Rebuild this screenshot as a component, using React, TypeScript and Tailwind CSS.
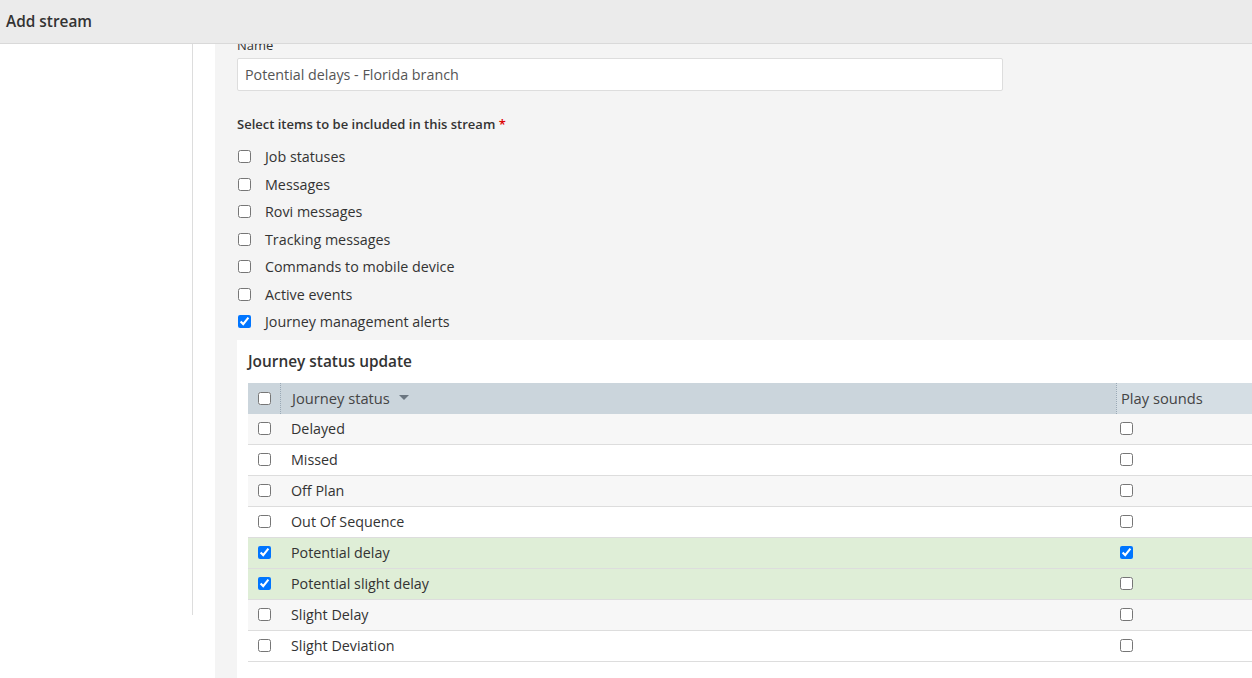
import React from "react";

const streamItems = [
  { label: "Job statuses", checked: false },
  { label: "Messages", checked: false },
  { label: "Rovi messages", checked: false },
  { label: "Tracking messages", checked: false },
  { label: "Commands to mobile device", checked: false },
  { label: "Active events", checked: false },
  { label: "Journey management alerts", checked: true },
];

const statuses = [
  { name: "Delayed", selected: false, sound: false },
  { name: "Missed", selected: false, sound: false },
  { name: "Off Plan", selected: false, sound: false },
  { name: "Out Of Sequence", selected: false, sound: false },
  { name: "Potential delay", selected: true, sound: true },
  { name: "Potential slight delay", selected: true, sound: false },
  { name: "Slight Delay", selected: false, sound: false },
  { name: "Slight Deviation", selected: false, sound: false },
];

function Check({ checked }: { checked: boolean }) {
  return (
    <input
      type="checkbox"
      defaultChecked={checked}
      className="m-0 h-[13px] w-[13px] shrink-0"
    />
  );
}

export default function App() {
  return (
    <div
      className="flex h-[678px] w-[1252px] flex-col overflow-hidden bg-white text-[#333]"
      style={{ fontFamily: '"Open Sans", "Noto Sans", sans-serif' }}
    >
      <div className="flex h-[44px] shrink-0 items-center border-b border-[#d9d9d9] bg-[#ebebeb] px-[6px]">
        <h1 className="text-[15.4px] font-semibold text-[#333]">Add stream</h1>
      </div>

      <div className="flex min-h-0 flex-1">
        <div className="h-[571px] w-[193px] shrink-0 self-start border-r border-[#ddd]" />
        <div className="w-[22px] shrink-0" />
        <div className="min-w-0 flex-1 overflow-hidden bg-[#f4f4f4] pl-[22px]">
          <div className="-mt-[8px] w-[1100px]">
            <label className="mb-[4px] block h-[18px] text-[13px] leading-[18px] text-[#333]">
              Name
            </label>
            <input
              type="text"
              defaultValue="Potential delays - Florida branch"
              className="block h-[33px] w-[766px] rounded-[2px] border border-[#ddd] bg-white px-[7px] text-[14.3px] text-[#555] outline-none"
            />

            <div className="mt-[24px] h-[18px] text-[13px] font-semibold leading-[18px] text-[#333]">
              Select items to be included in this stream{" "}
              <span className="text-[#d00]">*</span>
            </div>

            <div className="mt-[10px] flex flex-col">
              {streamItems.map((item) => (
                <label
                  key={item.label}
                  className="flex h-[27.5px] items-center gap-[14px] pl-[1px] text-[14.3px] text-[#333]"
                >
                  <Check checked={item.checked} />
                  <span>{item.label}</span>
                </label>
              ))}
            </div>

            <div className="mt-[4px] h-[400px] bg-white px-[11px] pt-[12px]">
              <h2 className="mb-[11px] h-[20px] text-[15.4px] font-semibold leading-[20px] text-[#333]">
                Journey status update
              </h2>

              <div className="text-[14.3px] text-[#333]">
                <div className="flex h-[31px] items-center bg-[#cbd5dc]">
                  <div className="flex h-full w-[32px] shrink-0 items-center pl-[10px]">
                    <Check checked={false} />
                  </div>
                  <div className="flex h-full flex-1 items-center border-l border-dotted border-[#9aa9b6] pl-[11px] text-[14.7px] text-[#444]">
                    Journey status
                    <svg width="10" height="6" viewBox="0 0 10 6" className="ml-[9px]">
                      <path d="M0 0 L10 0 L5 5 Z" fill="#6b7680" />
                    </svg>
                  </div>
                  <div className="flex h-full w-[210px] shrink-0 items-center border-l border-dotted border-[#9aa9b6] bg-[#d5dee4] pl-[4px] text-[14.7px] text-[#444]">
                    Play sounds
                  </div>
                </div>

                {statuses.map((s, i) => {
                  const bg = s.selected
                    ? "bg-[#dfeed7]"
                    : i % 2 === 0
                    ? "bg-[#f7f7f7]"
                    : "bg-white";
                  return (
                    <div
                      key={s.name}
                      className={`flex h-[31px] items-center border-b border-[#ddd] ${bg}`}
                    >
                      <div className="flex w-[32px] shrink-0 items-center pl-[10px]">
                        <Check checked={s.selected} />
                      </div>
                      <div className="flex-1 pl-[11px]">{s.name}</div>
                      <div className="flex w-[210px] shrink-0 items-center pl-[4px]">
                        <Check checked={s.sound} />
                      </div>
                    </div>
                  );
                })}
              </div>
            </div>
          </div>
        </div>
      </div>
    </div>
  );
}
